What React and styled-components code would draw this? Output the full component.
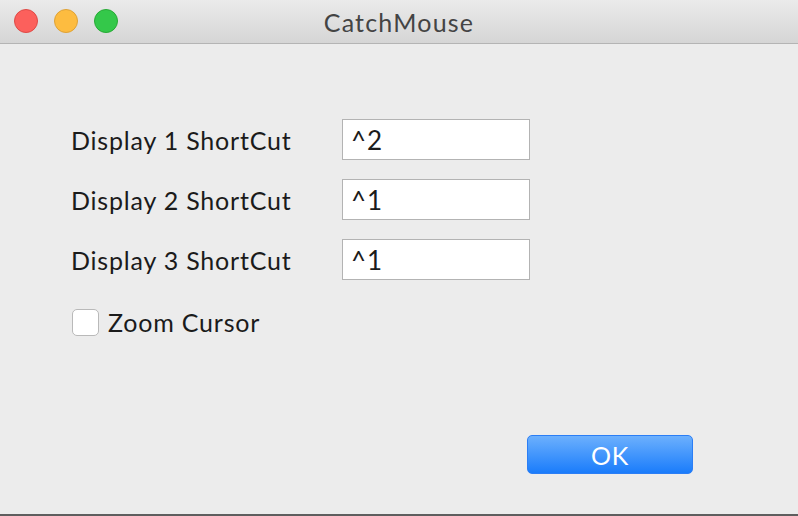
import styled, { createGlobalStyle } from "styled-components";

const GlobalStyle = createGlobalStyle`
  html, body {
    margin: 0;
    padding: 0;
    background: #ececec;
  }
  * {
    box-sizing: border-box;
  }
`;

const shortcuts = [
  { label: "Display 1 ShortCut", value: "^2" },
  { label: "Display 2 ShortCut", value: "^1" },
  { label: "Display 3 ShortCut", value: "^1" },
];

const lights = [
  { fill: "#fc605c", edge: "#de4a46" },
  { fill: "#fdbc40", edge: "#dea236" },
  { fill: "#34c84a", edge: "#27aa35" },
];

const App = () => {
  return (
    <>
      <GlobalStyle />
      <Window>
        <TitleBar>
          <Lights>
            {lights.map((l, i) => (
              <Light key={i} $fill={l.fill} $edge={l.edge} />
            ))}
          </Lights>
          <Title>CatchMouse</Title>
        </TitleBar>
        <Content>
          <Form>
            {shortcuts.map((s) => (
              <Row key={s.label}>
                <Label>{s.label}</Label>
                <Field type="text" defaultValue={s.value} />
              </Row>
            ))}
            <CheckRow>
              <Box type="checkbox" />
              <CheckText>Zoom Cursor</CheckText>
            </CheckRow>
          </Form>
          <Footer>
            <OkButton>OK</OkButton>
          </Footer>
        </Content>
        <BottomEdge />
      </Window>
    </>
  );
};

const Window = styled.div`
  width: 798px;
  height: 516px;
  display: flex;
  flex-direction: column;
  background: #ececec;
  font-family: "Lato", "Noto Sans", sans-serif;
  color: #1b1b1b;
  overflow: hidden;
`;

const TitleBar = styled.header`
  position: relative;
  height: 44px;
  flex-shrink: 0;
  display: flex;
  align-items: center;
  justify-content: center;
  background: linear-gradient(#ebebeb, #d5d5d5);
  border-bottom: 1px solid #b4b4b4;
`;

const Lights = styled.div`
  position: absolute;
  left: 14px;
  top: 9px;
  display: flex;
  gap: 16px;
`;

const Light = styled.span`
  width: 24px;
  height: 24px;
  border-radius: 50%;
  background: ${(p) => p.$fill};
  border: 1px solid ${(p) => p.$edge};
`;

const Title = styled.h1`
  margin: 0;
  font-size: 25px;
  font-weight: 400;
  letter-spacing: 1.2px;
  color: #444;
`;

const Content = styled.main`
  flex: 1;
  display: flex;
  flex-direction: column;
  padding: 75px 105px 40px 71px;
`;

const Form = styled.div`
  display: flex;
  flex-direction: column;
  gap: 19px;
`;

const Row = styled.div`
  display: flex;
  align-items: center;
`;

const Label = styled.span`
  width: 271px;
  font-size: 25px;
  letter-spacing: 0.8px;
`;

const Field = styled.input`
  width: 188px;
  height: 41px;
  border: 1px solid #b3b3b3;
  background: #fff;
  padding: 0 8px;
  font-family: inherit;
  font-size: 26px;
  letter-spacing: 0.8px;
  color: #1b1b1b;
  outline: none;
`;

const CheckRow = styled.label`
  display: flex;
  align-items: center;
  gap: 9px;
  margin-top: 10px;
  padding-left: 1px;
`;

const Box = styled.input`
  appearance: none;
  margin: 0;
  width: 27px;
  height: 27px;
  border: 1px solid #b9b9b9;
  border-radius: 5px;
  background: #fff;
`;

const CheckText = styled.span`
  font-size: 25px;
  letter-spacing: 0.8px;
  line-height: 1;
`;

const Footer = styled.div`
  margin-top: auto;
  display: flex;
  justify-content: flex-end;
`;

const OkButton = styled.button`
  width: 166px;
  height: 39px;
  border: 1px solid #2b7ef5;
  border-radius: 5px;
  background: linear-gradient(#6cb0fd, #1a7cfb);
  color: #fff;
  font-family: inherit;
  font-size: 25px;
  letter-spacing: 0.8px;
  padding: 0;
`;

const BottomEdge = styled.div`
  height: 2px;
  flex-shrink: 0;
  background: #5e5e5e;
`;

export default App;
